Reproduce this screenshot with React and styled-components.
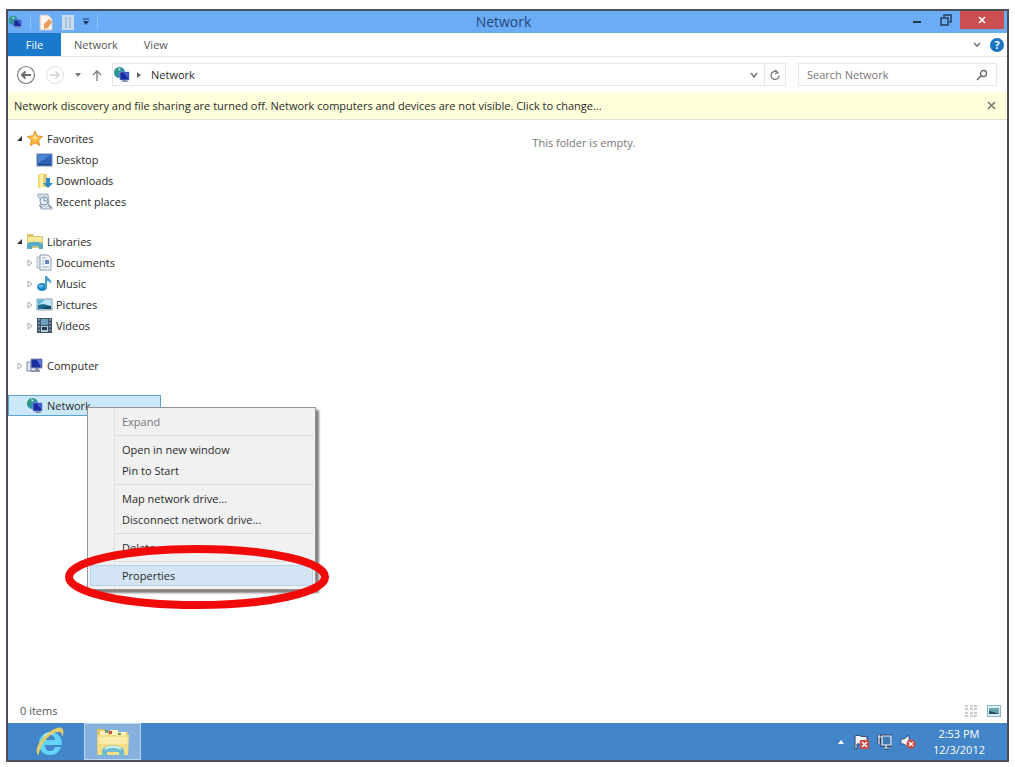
import React from "react"
import styled, { createGlobalStyle } from "styled-components"

const GlobalStyle = createGlobalStyle`
  * { box-sizing: border-box; }
  body {
    margin: 0;
    background: #fff;
    color: #2a2a2a;
    font-family: "Open Sans", "Noto Sans", sans-serif;
    font-size: 11px;
    line-height: 16px;
  }
  button, input { font: inherit; color: inherit; }
`

const NetworkIcon = ({ size = 18 }) => (
    <svg width={size} height={size} viewBox="0 0 18 18">
        <circle cx="6.5" cy="6.5" r="5.5" fill="#2f8fb4" />
        <path d="M2 4c2-3 5-3 7-2L7 5 4 6l1 3-2 1C1 8 1 6 2 4z" fill="#2f9a78" />
        <path d="M5 2l3 1-2 2z" fill="#b9e8ee" />
        <path d="M7 6h9v8H7z" fill="#1a2a9e" stroke="#7f99d2" strokeWidth=".7" />
        <path d="M11 7h4.500v6z" fill="#3f63dc" />
        <path d="M10 14h4l1 2H9z" fill="#7f92b6" />
    </svg>
)

const StarIcon = () => (
    <svg width="18" height="17" viewBox="0 0 17 17">
        <path d="M8.5 1l2.2 4.9 5.3.6-4 3.6 1.2 5.4-4.7-2.7-4.7 2.7L5 10.1 1 6.5l5.3-.6z" fill="#fbb93a" stroke="#dd8d2c" />
        <path d="M8.5 3l1.5 4 3 .5-4.500 2L4 7.500 7 7z" fill="#ffe18a" />
    </svg>
)

const DesktopIcon = () => (
    <svg width="17" height="17" viewBox="0 0 17 17">
        <rect x="1" y="3" width="15" height="12" fill="#2e63b5" stroke="#6386bd" />
        <path d="M2 4h13L2 12z" fill="#4e86d4" />
        <path d="M2 13.5h13" stroke="#26426f" />
    </svg>
)

const DownloadsIcon = () => (
    <svg width="17" height="17" viewBox="0 0 17 17">
        <path d="M2 3l5-2v14l-5 1z" fill="#f3d66c" />
        <path d="M7 2h4v13H7z" fill="#e6cd76" />
        <path d="M4 3l3-1v13l-3 1z" fill="#fff0a9" />
        <path d="M10 6h4v5h3l-5 5-5-5h3z" fill="#2f87c6" />
    </svg>
)

const RecentIcon = () => (
    <svg width="17" height="17" viewBox="0 0 17 17">
        <path d="M2 1h10l1 11 3 2v2H5L4 5 2 4z" fill="#d5dfe9" stroke="#9daebe" />
        <circle cx="8" cy="8" r="4" fill="#eff6fb" stroke="#8196ad" />
        <path d="M8 5v3h3M3 12l3 3M12 12l3 3" fill="none" stroke="#687e98" />
    </svg>
)

const LibrariesIcon = () => (
    <svg width="18" height="17" viewBox="0 0 18 17">
        <path d="M1 1h6l1 2h9v12H1z" fill="#dcc66c" />
        <path d="M2 4h14v5H2z" fill="#f8e99a" />
        <path d="M3 9h12v5H3z" fill="#9cce9f" />
        <path d="M1 11c5-3 11-3 16 0v5h-4v-3H6v3H1z" fill="#57a9c4" />
    </svg>
)

const DocumentsIcon = () => (
    <svg width="17" height="17" viewBox="0 0 17 17">
        <path d="M1 3h5v11H1z" fill="#dbe6f0" stroke="#aab8c6" />
        <path d="M4 1h8l3 3v12H4z" fill="#f0f5fa" stroke="#8f9dac" />
        <path d="M9 6h4v4H9z" fill="#6289b8" />
        <path d="M6 4h4M6 7h2M6 10h2M6 13h7" stroke="#9dadbd" />
    </svg>
)

const MusicIcon = () => (
    <svg width="17" height="17" viewBox="0 0 17 17">
        <ellipse cx="6" cy="12" rx="5" ry="4" fill="#2187cb" />
        <ellipse cx="5" cy="11" rx="2.5" ry="1.5" fill="#64bceb" />
        <path d="M9 1h2c1 3 5 3 4 8-1-2-2-3-4-3v7H9z" fill="#4a9fcb" />
    </svg>
)

const PicturesIcon = () => (
    <svg width="17" height="17" viewBox="0 0 17 17">
        <rect x="1" y="3" width="15" height="11" fill="#bfe5f2" stroke="#8ba0ad" />
        <path d="M2 4h7L2 9z" fill="#5ab7dc" />
        <path d="M2 9l5-1 8 2v3H2z" fill="#1f6c94" />
        <path d="M6 11l9-1v3H9z" fill="#174b65" />
    </svg>
)

const VideosIcon = () => (
    <svg width="17" height="17" viewBox="0 0 17 17">
        <rect x="1" y="1" width="15" height="15" fill="#40566a" />
        <rect x="5" y="2" width="7" height="6" fill="#6e9ebd" />
        <rect x="5" y="9" width="7" height="6" fill="#b5cbd8" />
        <path d="M3 2v13M14 2v13" stroke="#c9d5dd" strokeDasharray="1.5 2" />
        <path d="M6 10h5v3H6z" fill="#263f56" />
    </svg>
)

const ComputerIcon = () => (
    <svg width="18" height="17" viewBox="0 0 18 17">
        <path d="M1 5h4v9H1z" fill="#dfe4ee" stroke="#7d8cab" />
        <path d="M5 2h11v9H5z" fill="#1d2ea2" stroke="#8794b8" />
        <path d="M11 3h4v7z" fill="#5678de" />
        <path d="M5 14h9M9 12h4" stroke="#8b96ad" strokeWidth="2" />
    </svg>
)

const ExplorerIcon = () => (
    <svg width="34" height="30" viewBox="0 0 34 30">
        <path d="M1 2h7l1 3h23v23H1z" fill="#e3c463" />
        <path d="M4 4h8v5H4zM14 3h8v6h-8zM23 5h7v4h-7z" fill="#fff4c6" />
        <path d="M9 3h3v3H9zM22 6h3v2h-3z" fill="#709d62" />
        <path d="M13 4h3v3h-3z" fill="#c95037" />
        <path d="M1 8h32l-1 20H2z" fill="#f3dd88" />
        <path d="M3 10h28v7H3z" fill="#f9ebaa" />
        <path d="M6 23c3-6 18-6 22 0v6h-5v-4H11v4H6z" fill="#6cbdcf" />
        <path d="M9 22c4-3 12-3 16 0" stroke="#cdf0ed" strokeWidth="2" fill="none" />
    </svg>
)

const IeIcon = () => (
    <svg width="32" height="32" viewBox="0 0 32 32">
        <path d="M27 21c-2 5-5 8-11 8-7 0-11-5-11-11S9 6 16 6c8 0 12 5 12 13H11c0 4 2 6 5 6 2 0 4-1 5-4zM11 14h10c0-3-2-5-5-5s-5 2-5 5z" fill="#64d3f8" />
        <path d="M10 11c2-3 5-4 9-3" stroke="#c3f4ff" strokeWidth="2" fill="none" />
        <path d="M5 29C-1 27 5 14 13 8 20 2 28-1 29 4c1 2 0 5-1 7 0-3 0-5-3-5C18 5 5 18 5 29z" fill="#e2cd68" />
    </svg>
)

const folders = [
    {
        name: "Favorites", icon: <StarIcon />, open: true,
        items: [
            { name: "Desktop", icon: <DesktopIcon /> },
            { name: "Downloads", icon: <DownloadsIcon /> },
            { name: "Recent places", icon: <RecentIcon /> },
        ],
    },
    {
        name: "Libraries", icon: <LibrariesIcon />, open: true,
        items: [
            { name: "Documents", icon: <DocumentsIcon />, closed: true },
            { name: "Music", icon: <MusicIcon />, closed: true },
            { name: "Pictures", icon: <PicturesIcon />, closed: true },
            { name: "Videos", icon: <VideosIcon />, closed: true },
        ],
    },
    { name: "Computer", icon: <ComputerIcon />, closed: true, items: [] },
]

const Arrow = ({ open, closed }) => (
    <ArrowBox viewBox="0 0 8 8">
        {open && <path d="M6 1v5H1z" fill="#333" />}
        {closed && <path d="M2 1l4 3-4 3z" fill="#fff" stroke="#aaa" />}
    </ArrowBox>
)

const TreeNode = ({ node, nested }) => (
    <TreeRow href="#" $nested={nested}>
        <Arrow open={node.open} closed={node.closed} />
        {node.icon}
        <TreeLabel>{node.name}</TreeLabel>
    </TreeRow>
)

const ContextMenu = () => (
    <Menu role="menu">
        <MenuItem role="menuitem" disabled>Expand</MenuItem>
        <MenuLine />
        <MenuItem role="menuitem">Open in new window</MenuItem>
        <MenuItem role="menuitem">Pin to Start</MenuItem>
        <MenuLine />
        <MenuItem role="menuitem">Map network drive...</MenuItem>
        <MenuItem role="menuitem">Disconnect network drive...</MenuItem>
        <MenuLine />
        <MenuItem role="menuitem">Delete</MenuItem>
        <MenuLine />
        <MenuItem role="menuitem" $active>Properties</MenuItem>
        <Ring viewBox="0 0 264 64">
            <ellipse cx="132" cy="32" rx="128" ry="28" fill="none" stroke="#f00a0a" strokeWidth="8" />
        </Ring>
    </Menu>
)

const TitleBar = () => (
    <Title>
        <QuickTools>
            <NetworkIcon size={15} />
            <ToolLine />
            <ToolButton aria-label="Properties">
                <svg width="16" height="17" viewBox="0 0 16 17">
                    <path d="M2 1h8l4 4v11H2z" fill="#fdf3ea" stroke="#c9c4c8" />
                    <path d="M6 10l5-5 3 3-4 6-4 1z" fill="#eb9a5e" />
                </svg>
            </ToolButton>
            <ToolButton aria-label="New folder">
                <svg width="14" height="17" viewBox="0 0 14 17">
                    <path d="M1 1h12v15H1z" fill="#c9dcee" />
                    <path d="M4 3h6v11H4z" fill="#a9c3dc" />
                    <path d="M7 3v11" stroke="#e7f1fa" />
                </svg>
            </ToolButton>
            <ToolButton aria-label="Customize toolbar">
                <svg width="8" height="8" viewBox="0 0 8 8">
                    <path d="M1 1h6" stroke="#1e3a60" />
                    <path d="M1 3h6L4 7z" fill="#1e3a60" />
                </svg>
            </ToolButton>
            <ToolLine />
        </QuickTools>
        <TitleText>Network</TitleText>
        <WindowButtons>
            <WindowButton aria-label="Minimize">
                <svg width="10" height="10" viewBox="0 0 10 10"><path d="M1 7h8" stroke="#21344e" strokeWidth="2" /></svg>
            </WindowButton>
            <WindowButton aria-label="Restore">
                <svg width="12" height="12" viewBox="0 0 12 12">
                    <path d="M4 3V1h7v7H9" fill="none" stroke="#263f60" strokeWidth="1.5" />
                    <rect x="1" y="4" width="7" height="7" fill="none" stroke="#263f60" strokeWidth="1.5" />
                </svg>
            </WindowButton>
            <WindowButton aria-label="Close" $close>
                <svg width="8" height="8" viewBox="0 0 8 8"><path d="M1 1l6 6M7 1L1 7" stroke="#fff" strokeWidth="1.6" /></svg>
            </WindowButton>
        </WindowButtons>
    </Title>
)

const App = () => {
    return (
        <Desktop>
            <GlobalStyle />
            <Frame>
                <TitleBar />
                <Tabs>
                    <FileTab>File</FileTab>
                    <Tab>Network</Tab>
                    <Tab>View</Tab>
                    <TabsEnd>
                        <IconButton aria-label="Expand the ribbon">
                            <svg width="10" height="8" viewBox="0 0 10 8"><path d="M2 2l3 3 3-3" fill="none" stroke="#777" strokeWidth="1.6" /></svg>
                        </IconButton>
                        <IconButton aria-label="Help">
                            <HelpMark>?</HelpMark>
                        </IconButton>
                    </TabsEnd>
                </Tabs>
                <NavBar>
                    <IconButton aria-label="Back">
                        <svg width="20" height="20" viewBox="0 0 20 20">
                            <circle cx="10" cy="10" r="8.5" fill="#fff" stroke="#808080" strokeWidth="1.2" />
                            <path d="M15 10H6M9.5 6.5L6 10l3.500 3.500" fill="none" stroke="#6c6c6c" strokeWidth="2" />
                        </svg>
                    </IconButton>
                    <IconButton aria-label="Forward">
                        <svg width="20" height="20" viewBox="0 0 20 20">
                            <circle cx="10" cy="10" r="8.5" fill="#fff" stroke="#dedede" />
                            <path d="M5 10h9M10.500 6.500L14 10l-3.500 3.500" fill="none" stroke="#d0d0d0" strokeWidth="1.6" />
                        </svg>
                    </IconButton>
                    <IconButton aria-label="Recent locations">
                        <svg width="8" height="6" viewBox="0 0 8 6"><path d="M1 1h6L4 5z" fill="#777" /></svg>
                    </IconButton>
                    <IconButton aria-label="Up">
                        <svg width="12" height="14" viewBox="0 0 12 14"><path d="M6 13V3M2 7l4-4 4 4" fill="none" stroke="#808080" strokeWidth="1.4" /></svg>
                    </IconButton>
                    <Address>
                        <NetworkIcon />
                        <svg width="6" height="8" viewBox="0 0 6 8"><path d="M1 1l4 3-4 3z" fill="#666" /></svg>
                        <Crumb href="#">Network</Crumb>
                        <AddressEnd>
                            <AddressButton aria-label="Previous locations">
                                <svg width="8" height="8" viewBox="0 0 8 8"><path d="M1 2l3 4 3-4" fill="none" stroke="#777" strokeWidth="1.5" /></svg>
                            </AddressButton>
                            <AddressButton aria-label="Refresh" $line>
                                <svg width="12" height="12" viewBox="0 0 12 12">
                                    <path d="M10 6.500A4 4 0 1 1 8 3" fill="none" stroke="#777" strokeWidth="1.3" />
                                    <path d="M6 1l3 2.500L6 5" fill="none" stroke="#777" strokeWidth="1.3" />
                                </svg>
                            </AddressButton>
                        </AddressEnd>
                    </Address>
                    <Search>
                        <SearchInput type="text" aria-label="Search Network" placeholder="Search Network" />
                        <svg width="12" height="12" viewBox="0 0 12 12">
                            <circle cx="7.5" cy="4.500" r="3" fill="none" stroke="#666" strokeWidth="1.3" />
                            <path d="M5 7l-4 4" stroke="#666" strokeWidth="1.6" />
                        </svg>
                    </Search>
                </NavBar>
                <Notice>
                    <NoticeText href="#">Network discovery and file sharing are turned off. Network computers and devices are not visible. Click to change...</NoticeText>
                    <IconButton aria-label="Close message">
                        <svg width="9" height="9" viewBox="0 0 9 9"><path d="M1 1l7 7M8 1L1 8" stroke="#777" strokeWidth="1.6" /></svg>
                    </IconButton>
                </Notice>
                <Body>
                    <Sidebar>
                        {folders.map((folder) => (
                            <TreeGroup key={folder.name}>
                                <TreeNode node={folder} />
                                {folder.items.map((item) => (
                                    <TreeNode key={item.name} node={item} nested />
                                ))}
                            </TreeGroup>
                        ))}
                        <TreeGroup>
                            <TreeRow href="#" $selected>
                                <Arrow />
                                <NetworkIcon />
                                <TreeLabel>Network</TreeLabel>
                            </TreeRow>
                            <ContextMenu />
                        </TreeGroup>
                    </Sidebar>
                    <Content>This folder is empty.</Content>
                </Body>
                <StatusBar>
                    <StatusText>0 items</StatusText>
                    <IconButton aria-label="Details view">
                        <svg width="14" height="14" viewBox="0 0 14 14">
                            <path d="M1 2h3M1 5h3M1 9h3M1 12h3M6 2h3M10 2h3M6 5h3M10 5h3M6 9h3M10 9h3M6 12h3M10 12h3" stroke="#999" />
                        </svg>
                    </IconButton>
                    <IconButton aria-label="Large icons view">
                        <svg width="14" height="12" viewBox="0 0 14 12">
                            <rect x=".5" y=".5" width="13" height="11" fill="#d9eff2" stroke="#8bb8bf" />
                            <path d="M2 3h10v6H2z" fill="#69a5ad" />
                            <path d="M2 6l5 1 5 2H2z" fill="#244f60" />
                        </svg>
                    </IconButton>
                </StatusBar>
                <Taskbar>
                    <TaskButton aria-label="Internet Explorer"><IeIcon /></TaskButton>
                    <TaskButton aria-label="File Explorer" $active><ExplorerIcon /></TaskButton>
                    <Tray>
                        <IconButton aria-label="Show hidden icons">
                            <svg width="8" height="6" viewBox="0 0 8 6"><path d="M4 1l3 4H1z" fill="#fff" /></svg>
                        </IconButton>
                        <IconButton aria-label="Action Center">
                            <svg width="16" height="16" viewBox="0 0 16 16">
                                <path d="M2 15V2c5-2 6 2 12 0v8c-5 2-7-1-10 0v5z" fill="#f4f6fa" stroke="#2b4668" />
                                <rect x="7" y="6" width="9" height="9" fill="#cf4a42" />
                                <path d="M9 8l5 5M14 8l-5 5" stroke="#fff" strokeWidth="1.4" />
                            </svg>
                        </IconButton>
                        <IconButton aria-label="Network status">
                            <svg width="15" height="16" viewBox="0 0 15 16">
                                <path d="M5 2h9v9H5zM2 1v9M1 3h3M7 14h5M9 11v3" fill="none" stroke="#263f60" strokeWidth="3" />
                                <path d="M5 2h9v9H5zM2 1v9M1 3h3M7 14h5M9 11v3" fill="#3f79b6" stroke="#f3f7fc" strokeWidth="1.2" />
                            </svg>
                        </IconButton>
                        <IconButton aria-label="Volume">
                            <svg width="16" height="16" viewBox="0 0 16 16">
                                <path d="M1 5h3l5-4v13l-5-4H1z" fill="#f4f6fa" stroke="#36577f" />
                                <circle cx="11" cy="10" r="4.500" fill="#cf4a42" />
                                <path d="M9 8l4 4M13 8l-4 4" stroke="#fff" strokeWidth="1.4" />
                            </svg>
                        </IconButton>
                        <Clock>
                            <span>2:53 PM</span>
                            <span>12/3/2012</span>
                        </Clock>
                    </Tray>
                </Taskbar>
            </Frame>
        </Desktop>
    )
}

const Desktop = styled.div`
display: flex;
min-height: 100vh;
padding: 9px 6px 5px 6px;
`;

const Frame = styled.div`
display: flex;
flex-direction: column;
flex: 1;
min-width: 0;
border: 2px solid #4b4f5c;
`;

const Title = styled.header`
display: flex;
height: 22px;
background: #6aacf6;
`;

const QuickTools = styled.div`
display: flex;
align-items: center;
gap: 7px;
width: 97px;
`;

const ToolLine = styled.span`
width: 1px;
height: 14px;
background: #8fc3fb;
`;

const ToolButton = styled.button`
display: flex;
padding: 0;
border: 0;
background: none;
`;

const TitleText = styled.h1`
flex: 1;
margin: 0;
color: #28487a;
font-size: 14px;
font-weight: normal;
line-height: 22px;
text-align: center;
`;

const WindowButtons = styled.div`
display: flex;
width: 105px;
padding-right: 3px;
`;

const WindowButton = styled.button`
display: flex;
align-items: center;
justify-content: center;
width: ${(props) => (props.$close ? "44px" : "29px")};
height: 18px;
padding: 0;
border: 0;
background: ${(props) => (props.$close ? "#c94f50" : "none")};
`;

const Tabs = styled.nav`
display: flex;
height: 24px;
border-bottom: 1px solid #e6e6e6;
`;

const Tab = styled.button`
padding: 0 13px;
border: 0;
background: none;
color: #555;
`;

const FileTab = styled(Tab)`
width: 53px;
background: #1979ca;
color: #fff;
`;

const TabsEnd = styled.div`
display: flex;
align-items: center;
gap: 8px;
margin-left: auto;
padding-right: 3px;
`;

const IconButton = styled.button`
display: flex;
align-items: center;
justify-content: center;
padding: 0;
border: 0;
background: none;
`;

const HelpMark = styled.span`
width: 14px;
height: 14px;
border-radius: 50%;
background: #1a74c4;
color: #fff;
font-weight: bold;
line-height: 14px;
`;

const NavBar = styled.div`
display: flex;
align-items: center;
gap: 9px;
height: 35px;
padding: 0 10px 0 8px;
`;

const Address = styled.div`
display: flex;
align-items: center;
gap: 5px;
flex: 1;
height: 23px;
margin-right: 3px;
border: 1px solid #e8e8e8;
`;

const Crumb = styled.a`
flex: 1;
padding-left: 4px;
color: inherit;
text-decoration: none;
`;

const AddressEnd = styled.div`
display: flex;
`;

const AddressButton = styled.button`
display: flex;
align-items: center;
justify-content: center;
width: 21px;
height: 21px;
padding: 0;
border: 0;
border-left: ${(props) => (props.$line ? "1px solid #e8e8e8" : "0")};
background: none;
`;

const Search = styled.label`
display: flex;
align-items: center;
width: 199px;
height: 23px;
padding: 0 8px;
border: 1px solid #e8e8e8;
`;

const SearchInput = styled.input`
flex: 1;
min-width: 0;
padding: 0;
border: 0;
outline: 0;
background: none;
&::placeholder {
    color: #777;
    opacity: 1;
}
`;

const Notice = styled.div`
display: flex;
align-items: center;
justify-content: space-between;
height: 28px;
padding: 0 11px 0 6px;
border-bottom: 1px solid #e0e0d4;
background: #ffffdc;
`;

const NoticeText = styled.a`
color: #2a2a2a;
text-decoration: none;
`;

const Body = styled.main`
display: flex;
flex: 1;
`;

const Sidebar = styled.aside`
display: flex;
flex-direction: column;
gap: 19px;
width: 153px;
padding-top: 8px;
`;

const TreeGroup = styled.div`
position: relative;
`;

const TreeRow = styled.a`
display: flex;
align-items: center;
height: 21px;
padding-left: ${(props) => (props.$nested ? "17px" : "7px")};
border: 1px solid ${(props) => (props.$selected ? "#5ba3d0" : "transparent")};
background: ${(props) => (props.$selected ? "#cbe8f8" : "none")};
color: inherit;
text-decoration: none;
`;

const ArrowBox = styled.svg`
width: 8px;
height: 8px;
margin-right: 2px;
`;

const TreeLabel = styled.span`
padding-left: 3px;
`;

const Menu = styled.div`
position: absolute;
top: 12px;
left: 79px;
z-index: 1;
width: 229px;
padding: 3px 2px;
border: 1px solid #959595;
background: linear-gradient(90deg, #f1f1f1 26px, #dedede 26px, #dedede 27px, #f1f1f1 27px);
box-shadow: 3px 3px 2px #808080;
`;

const MenuItem = styled.button`
display: block;
width: 100%;
height: 21px;
padding: 0 0 0 31px;
border: 1px solid ${(props) => (props.$active ? "#b4d3e8" : "transparent")};
background: ${(props) => (props.$active ? "#d3e5f4" : "none")};
line-height: 16px;
text-align: left;
&:disabled {
    color: #777;
}
`;

const MenuLine = styled.hr`
height: 1px;
margin: 3px 0 3px 26px;
border: 0;
background: #dcdcdc;
`;

// marks the Properties entry
const Ring = styled.svg`
position: absolute;
left: -23px;
bottom: -20px;
width: 264px;
height: 64px;
pointer-events: none;
`;

const Content = styled.section`
flex: 1;
padding-top: 15px;
color: #777;
text-align: center;
`;

const StatusBar = styled.footer`
display: flex;
align-items: center;
gap: 9px;
height: 24px;
padding: 0 6px 0 12px;
`;

const StatusText = styled.span`
flex: 1;
color: #555;
`;

const Taskbar = styled.footer`
display: flex;
height: 37px;
padding-left: 8px;
background: #4285c8;
`;

const TaskButton = styled.button`
display: flex;
align-items: center;
justify-content: center;
width: ${(props) => (props.$active ? "57px" : "68px")};
padding: 0;
border: 1px solid ${(props) => (props.$active ? "#b9d7f2" : "transparent")};
background: ${(props) => (props.$active ? "#86b1de" : "none")};
`;

const Tray = styled.div`
display: flex;
align-items: center;
gap: 8px;
margin-left: auto;
padding-right: 22px;
`;

const Clock = styled.time`
display: flex;
flex-direction: column;
align-items: center;
padding-left: 9px;
color: #fff;
`;

export default App
